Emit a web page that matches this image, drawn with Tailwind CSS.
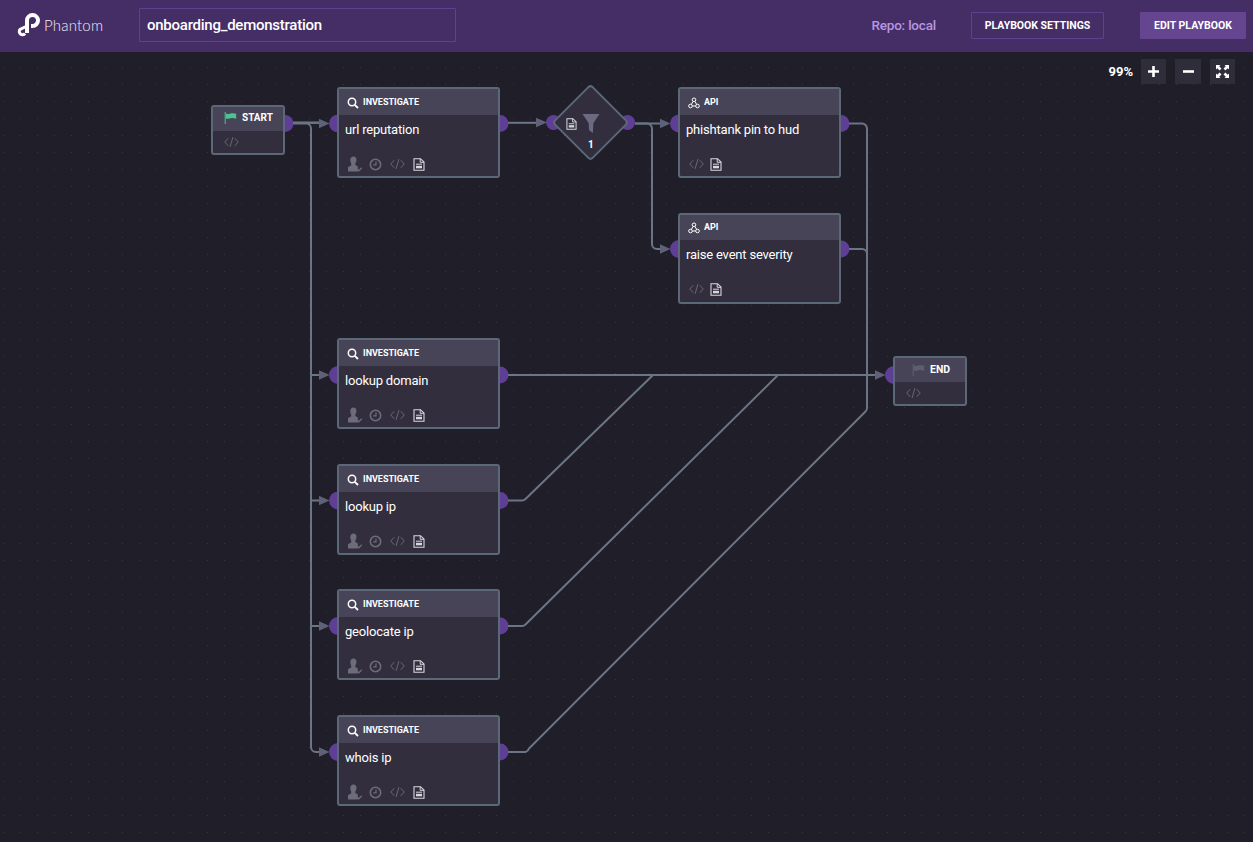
<!DOCTYPE html>
<html lang="en">
<head>
  <meta charset="UTF-8">
  <title>Phantom - onboarding_demonstration</title>
  <script src="https://cdn.jsdelivr.net/npm/@tailwindcss/browser@4"></script>
</head>
<body class="bg-[#201f29] overflow-hidden font-['Roboto',sans-serif] text-white">
  <!-- Icons -->
  <svg class="absolute w-0 h-0">
    <symbol id="i-search" viewBox="0 0 12 12"><circle cx="5" cy="5" r="3.7" fill="none" stroke="currentColor" stroke-width="1.5"/><path d="M7.8 7.8L11 11" stroke="currentColor" stroke-width="1.8" fill="none"/></symbol>
    <symbol id="i-api" viewBox="0 0 12 12"><g fill="none" stroke="currentColor" stroke-width="1"><circle cx="6" cy="2.8" r="1.8"/><circle cx="2.500" cy="9" r="1.8"/><circle cx="9.500" cy="9" r="1.8"/><path d="M5 4.500L3.400 7.400M7 4.500L8.600 7.400M4.300 9H7.700"/></g></symbol>
    <symbol id="i-user" viewBox="0 0 14 16"><path d="M5.500 0.500c1.900 0 3 1.400 3 3.200 0 1.600-.7 3-1.200 3.800v1.600c1 .5 1.700 .8 2.500 1.300v5.100H0v-4.300c.9-.6 2.200-1.100 3.200-1.600V7.500C2.700 6.700 2.300 5.300 2.300 3.700c0-1.800 1.300-3.200 3.200-3.200z" fill="currentColor"/><path d="M9.200 13.200l1.600 1.600L13.800 11.800" fill="none" stroke="currentColor" stroke-width="1.300"/></symbol>
    <symbol id="i-clock" viewBox="0 0 14 14"><circle cx="7" cy="7" r="5.600" fill="none" stroke="currentColor" stroke-width="1.700"/><path d="M7.500 3.800V7.500H4.500" fill="none" stroke="currentColor" stroke-width="1.300"/></symbol>
    <symbol id="i-code" viewBox="0 0 16 12"><path d="M4.500 2L0.800 6l3.700 4M11.500 2l3.700 4-3.700 4M9.500 0.800L6.500 11.200" fill="none" stroke="currentColor" stroke-width="1"/></symbol>
    <symbol id="i-doc" viewBox="0 0 12 13"><path d="M1 .7h6.500L11 4v8.300H1z" fill="none" stroke="currentColor" stroke-width="1.100"/><path d="M7.200 .7V4.300H11" fill="none" stroke="currentColor" stroke-width="1"/><path d="M3 6.200h6" stroke="currentColor" stroke-width="1"/><rect x="3" y="7.800" width="6" height="2.500" fill="currentColor"/></symbol>
    <symbol id="i-flag" viewBox="0 0 13 12"><path d="M1.200 0v12" stroke="currentColor" stroke-width="1"/><path d="M1.700 1.500c2.500 1.200 4.500-.5 7-.3 1.200.1 2.200.5 3.800.5-.6 1.300-.6 3.300 0 4.800-2 .2-3-.5-4.300-.5-2.500 0-4 1.500-6.500.5z" fill="currentColor"/></symbol>
  </svg>

  <!-- Top bar -->
  <header class="h-[52px] bg-[#452e65] flex items-center pl-[17px] pr-[7px] pb-[1px]">
    <div class="w-[122px] flex items-center gap-[3px] shrink-0">
      <svg width="24" height="26" viewBox="0 0 24 26" class="shrink-0" fill="none" stroke="#fff">
        <path d="M10 20V7.500a5.500 5.500 0 1 1 5.500 5.500H14" stroke-width="4"/>
        <path d="M10 13L3 16.500a3.200 3.200 0 1 0 5 4" stroke-width="3"/>
      </svg>
      <span class="mb-[1px] font-['Lato',sans-serif] font-light text-[15px] tracking-[.2px] text-[#f0edf5]">Phantom</span>
    </div>
    <div class="w-[317px] h-[34px] mb-[2px] pt-[1px] border border-[#5d4291] rounded-[1px] px-[7px] flex items-center text-[15px] tracking-[-0.25px] font-medium">onboarding_demonstration</div>
    <span class="ml-auto text-[13.500px] tracking-[-0.2px] font-medium text-[#b596e0]">Repo: local</span>
    <div class="ml-[35px] w-[133px] h-[27px] border border-[#5d4291] rounded-[1px] flex items-center justify-center text-[10.500px] font-bold">PLAYBOOK SETTINGS</div>
    <div class="ml-[36px] w-[106px] h-[27px] bg-[#654590] rounded-[1px] flex items-center justify-center text-[10.500px] font-bold">EDIT PLAYBOOK</div>
  </header>

  <!-- Canvas -->
  <main class="relative h-[790px] overflow-hidden">
    <svg class="absolute left-0 top-0" width="1253" height="790" viewBox="0 52 1253 790">
      <defs>
        <pattern id="dots" x="3" y="16" width="17" height="17" patternUnits="userSpaceOnUse"><rect width="1" height="1" fill="#363541"/></pattern>
      </defs>
      <rect x="0" y="52" width="1253" height="790" fill="url(#dots)"/>

      <g fill="#5f3f96">
        <circle cx="285" cy="123.500" r="8.500"/>
        <circle cx="338" cy="123.500" r="9"/><circle cx="500" cy="123.500" r="8.500"/>
        <circle cx="553.500" cy="122.500" r="7.500"/><circle cx="627.500" cy="122.500" r="7.500"/>
        <circle cx="679" cy="123.500" r="9"/><circle cx="841" cy="123.500" r="8.500"/>
        <circle cx="679" cy="249" r="9"/><circle cx="841" cy="249" r="8.500"/>
        <circle cx="338" cy="375" r="9"/><circle cx="500" cy="375" r="8.500"/>
        <circle cx="338" cy="500.500" r="9"/><circle cx="500" cy="500.500" r="8.500"/>
        <circle cx="338" cy="626" r="9"/><circle cx="500" cy="626" r="8.500"/>
        <circle cx="338" cy="752" r="9"/><circle cx="500" cy="752" r="8.500"/>
        <circle cx="894" cy="375" r="9"/>
      </g>

      <g fill="none" stroke="#6a7585" stroke-width="2">
        <path d="M293 122.700H322" stroke-width="2.500"/>
        <path d="M293 123.500H306a5 5 0 0 1 5 5V747a5 5 0 0 0 5 5H322"/>
        <path d="M311 375H322M311 500.500H322M311 626H322"/>
        <path d="M508 122.800H540"/>
        <path d="M635 123.500H662"/>
        <path d="M635 123.500H647a5 5 0 0 1 5 5V244a5 5 0 0 0 5 5H662"/>
        <path d="M849 123.500H862a5 5 0 0 1 5 5V408a5 5 0 0 1-1.500 3.500L529 748.500a5 5 0 0 1-3.500 3.500H508"/>
        <path d="M849 249H862a5 5 0 0 1 5 5V375"/>
        <path d="M508 375H878"/>
        <path d="M508 500.500H522a5 5 0 0 0 3.500-1.500L653 375"/>
        <path d="M508 626H522a5 5 0 0 0 3.500-1.500L778 375"/>
      </g>
      <g fill="#5e6178">
        <path d="M319 118.700L329.500 123.500L319 128.300z"/>
        <path d="M319 370.200L329.500 375L319 379.800z"/>
        <path d="M319 495.700L329.500 500.500L319 505.300z"/>
        <path d="M319 621.200L329.500 626L319 630.800z"/>
        <path d="M319 747.200L329.500 752L319 756.800z"/>
        <path d="M536 117.800L547 122.500L536 127.200z"/>
        <path d="M660 118.700L670.500 123.500L660 128.300z"/>
        <path d="M660 244.200L670.500 249L660 253.800z"/>
        <path d="M875 370.200L885.500 375L875 379.800z"/>
      </g>
    </svg>

    <!-- Zoom controls -->
    <div class="absolute right-[18px] top-[7px] flex items-center">
      <span class="mr-[8px] text-[13px] font-bold">99%</span>
      <div class="w-[25px] h-[25px] bg-[#2e2d39] flex items-center justify-center"><svg width="13" height="13" viewBox="0 0 13 13"><path d="M6.500 1v11M1 6.500h11" stroke="#fff" stroke-width="2.600"/></svg></div>
      <div class="ml-[9px] w-[26px] h-[25px] bg-[#2e2d39] flex items-center justify-center"><svg width="13" height="13" viewBox="0 0 13 13"><path d="M1 6.500h11" stroke="#fff" stroke-width="2.600"/></svg></div>
      <div class="ml-[9px] w-[25px] h-[25px] bg-[#2e2d39] flex items-center justify-center"><svg width="13" height="13" viewBox="0 0 13 13"><path d="M0 0h4.500L3.200 1.300 5.500 3.600 3.600 5.500 1.300 3.200 0 4.500zM13 0v4.500L11.700 3.200 9.400 5.500 7.500 3.600 9.800 1.300 8.500 0zM0 13V8.500l1.300 1.300 2.300-2.300 1.900 1.900-2.300 2.300L4.500 13zM13 13H8.500l1.300-1.300-2.300-2.300 1.900-1.900 2.300 2.300L13 8.500z" fill="#fff"/></svg></div>
    </div>

    <!-- Start -->
    <div class="absolute left-[211px] top-[53px] w-[74px] h-[50px] border-2 border-[#5b6878] rounded-[3px] bg-[#322e3e] overflow-hidden flex flex-col">
      <div class="h-[24px] pb-[3px] bg-[#474458] flex items-center pl-[11px] gap-[5px] text-[10px] font-bold"><svg class="w-[13px] h-[12px] text-[#4cc392]"><use href="#i-flag"/></svg>START</div>
      <div class="flex-1 pb-[1px] flex items-center pl-[11px]"><svg class="w-[15px] h-[12px] text-[#6d6c7b]"><use href="#i-code"/></svg></div>
    </div>

    <!-- Investigate: url reputation -->
    <div class="absolute left-[337px] top-[35px] w-[163px] h-[91px] border-2 border-[#5b6878] rounded-[3px] bg-[#322e3e] overflow-hidden flex flex-col">
      <div class="h-[26px] pt-[1px] shrink-0 bg-[#474458] flex items-center pl-[8px] gap-[4px] text-[9px] font-bold"><svg class="w-[12px] h-[12px]"><use href="#i-search"/></svg>INVESTIGATE</div>
      <div class="pl-[6px] pt-[7px] text-[13px] tracking-[-0.2px] leading-[16px]">url reputation</div>
      <div class="mt-auto mb-[4px] pl-[9px] flex items-center h-[16px]"><svg class="w-[14px] h-[16px] text-[#6d6c7b]"><use href="#i-user"/></svg><svg class="ml-[7px] w-[13px] h-[13px] text-[#6d6c7b]"><use href="#i-clock"/></svg><svg class="ml-[8px] w-[15px] h-[12px] text-[#6d6c7b]"><use href="#i-code"/></svg><svg class="ml-[8px] w-[12px] h-[13px] text-[#d8d8de]"><use href="#i-doc"/></svg></div>
    </div>

    <!-- Investigate: lookup domain -->
    <div class="absolute left-[337px] top-[286px] w-[163px] h-[91px] border-2 border-[#5b6878] rounded-[3px] bg-[#322e3e] overflow-hidden flex flex-col">
      <div class="h-[26px] pt-[1px] shrink-0 bg-[#474458] flex items-center pl-[8px] gap-[4px] text-[9px] font-bold"><svg class="w-[12px] h-[12px]"><use href="#i-search"/></svg>INVESTIGATE</div>
      <div class="pl-[6px] pt-[7px] text-[13px] tracking-[-0.2px] leading-[16px]">lookup domain</div>
      <div class="mt-auto mb-[4px] pl-[9px] flex items-center h-[16px]"><svg class="w-[14px] h-[16px] text-[#6d6c7b]"><use href="#i-user"/></svg><svg class="ml-[7px] w-[13px] h-[13px] text-[#6d6c7b]"><use href="#i-clock"/></svg><svg class="ml-[8px] w-[15px] h-[12px] text-[#6d6c7b]"><use href="#i-code"/></svg><svg class="ml-[8px] w-[12px] h-[13px] text-[#d8d8de]"><use href="#i-doc"/></svg></div>
    </div>

    <!-- Investigate: lookup ip -->
    <div class="absolute left-[337px] top-[412px] w-[163px] h-[91px] border-2 border-[#5b6878] rounded-[3px] bg-[#322e3e] overflow-hidden flex flex-col">
      <div class="h-[26px] pt-[1px] shrink-0 bg-[#474458] flex items-center pl-[8px] gap-[4px] text-[9px] font-bold"><svg class="w-[12px] h-[12px]"><use href="#i-search"/></svg>INVESTIGATE</div>
      <div class="pl-[6px] pt-[7px] text-[13px] tracking-[-0.2px] leading-[16px]">lookup ip</div>
      <div class="mt-auto mb-[4px] pl-[9px] flex items-center h-[16px]"><svg class="w-[14px] h-[16px] text-[#6d6c7b]"><use href="#i-user"/></svg><svg class="ml-[7px] w-[13px] h-[13px] text-[#6d6c7b]"><use href="#i-clock"/></svg><svg class="ml-[8px] w-[15px] h-[12px] text-[#6d6c7b]"><use href="#i-code"/></svg><svg class="ml-[8px] w-[12px] h-[13px] text-[#d8d8de]"><use href="#i-doc"/></svg></div>
    </div>

    <!-- Investigate: geolocate ip -->
    <div class="absolute left-[337px] top-[537px] w-[163px] h-[91px] border-2 border-[#5b6878] rounded-[3px] bg-[#322e3e] overflow-hidden flex flex-col">
      <div class="h-[26px] pt-[1px] shrink-0 bg-[#474458] flex items-center pl-[8px] gap-[4px] text-[9px] font-bold"><svg class="w-[12px] h-[12px]"><use href="#i-search"/></svg>INVESTIGATE</div>
      <div class="pl-[6px] pt-[7px] text-[13px] tracking-[-0.2px] leading-[16px]">geolocate ip</div>
      <div class="mt-auto mb-[4px] pl-[9px] flex items-center h-[16px]"><svg class="w-[14px] h-[16px] text-[#6d6c7b]"><use href="#i-user"/></svg><svg class="ml-[7px] w-[13px] h-[13px] text-[#6d6c7b]"><use href="#i-clock"/></svg><svg class="ml-[8px] w-[15px] h-[12px] text-[#6d6c7b]"><use href="#i-code"/></svg><svg class="ml-[8px] w-[12px] h-[13px] text-[#d8d8de]"><use href="#i-doc"/></svg></div>
    </div>

    <!-- Investigate: whois ip -->
    <div class="absolute left-[337px] top-[663px] w-[163px] h-[91px] border-2 border-[#5b6878] rounded-[3px] bg-[#322e3e] overflow-hidden flex flex-col">
      <div class="h-[26px] pt-[1px] shrink-0 bg-[#474458] flex items-center pl-[8px] gap-[4px] text-[9px] font-bold"><svg class="w-[12px] h-[12px]"><use href="#i-search"/></svg>INVESTIGATE</div>
      <div class="pl-[6px] pt-[7px] text-[13px] tracking-[-0.2px] leading-[16px]">whois ip</div>
      <div class="mt-auto mb-[4px] pl-[9px] flex items-center h-[16px]"><svg class="w-[14px] h-[16px] text-[#6d6c7b]"><use href="#i-user"/></svg><svg class="ml-[7px] w-[13px] h-[13px] text-[#6d6c7b]"><use href="#i-clock"/></svg><svg class="ml-[8px] w-[15px] h-[12px] text-[#6d6c7b]"><use href="#i-code"/></svg><svg class="ml-[8px] w-[12px] h-[13px] text-[#d8d8de]"><use href="#i-doc"/></svg></div>
    </div>

    <!-- Filter decision -->
    <div class="absolute left-[563px] top-[43px] w-[55px] h-[55px] rotate-45 border-2 border-[#5b6878] rounded-[4px] bg-[#322e3e]"></div>
    <div class="absolute left-[566px] top-[62px] w-[52px] flex items-center gap-[5px]">
      <svg class="w-[11px] h-[12px] text-[#d8d8de]"><use href="#i-doc"/></svg>
      <svg width="18" height="19" viewBox="0 0 18 20"><path d="M0 0h18L11.500 9.500L11 20L7 17L6.500 9.500z" fill="#6b6a80"/></svg>
    </div>
    <span class="absolute left-[588px] top-[87px] text-[10px] leading-[12px] font-bold">1</span>

    <!-- Api: phishtank pin to hud -->
    <div class="absolute left-[678px] top-[35px] w-[163px] h-[91px] border-2 border-[#5b6878] rounded-[3px] bg-[#322e3e] overflow-hidden flex flex-col">
      <div class="h-[26px] pt-[1px] shrink-0 bg-[#474458] flex items-center pl-[8px] gap-[4px] text-[9px] font-bold"><svg class="w-[12px] h-[12px]"><use href="#i-api"/></svg>API</div>
      <div class="pl-[6px] pt-[7px] text-[13px] tracking-[-0.2px] leading-[16px]">phishtank pin to hud</div>
      <div class="mt-auto mb-[4px] pl-[9px] flex items-center h-[16px]"><svg class="w-[15px] h-[12px] text-[#6d6c7b]"><use href="#i-code"/></svg><svg class="ml-[6px] w-[12px] h-[13px] text-[#d8d8de]"><use href="#i-doc"/></svg></div>
    </div>

    <!-- Api: raise event severity -->
    <div class="absolute left-[678px] top-[161px] w-[163px] h-[91px] border-2 border-[#5b6878] rounded-[3px] bg-[#322e3e] overflow-hidden flex flex-col">
      <div class="h-[25px] shrink-0 bg-[#474458] flex items-center pl-[8px] gap-[4px] text-[9px] font-bold"><svg class="w-[12px] h-[12px]"><use href="#i-api"/></svg>API</div>
      <div class="pl-[6px] pt-[7px] text-[13px] tracking-[-0.2px] leading-[16px]">raise event severity</div>
      <div class="mt-auto mb-[5px] pl-[9px] flex items-center h-[16px]"><svg class="w-[15px] h-[12px] text-[#6d6c7b]"><use href="#i-code"/></svg><svg class="ml-[6px] w-[12px] h-[13px] text-[#d8d8de]"><use href="#i-doc"/></svg></div>
    </div>

    <!-- End -->
    <div class="absolute left-[893px] top-[304px] w-[74px] h-[50px] border-2 border-[#5b6878] rounded-[3px] bg-[#322e3e] overflow-hidden flex flex-col">
      <div class="h-[24px] pb-[1px] bg-[#474458] flex items-center pl-[17px] gap-[5px] text-[10.500px] font-bold"><svg class="w-[13px] h-[12px] text-[#5f5e70]"><use href="#i-flag"/></svg>END</div>
      <div class="flex-1 flex items-center pl-[11px]"><svg class="w-[15px] h-[12px] text-[#6d6c7b]"><use href="#i-code"/></svg></div>
    </div>
  </main>
</body>
</html>
